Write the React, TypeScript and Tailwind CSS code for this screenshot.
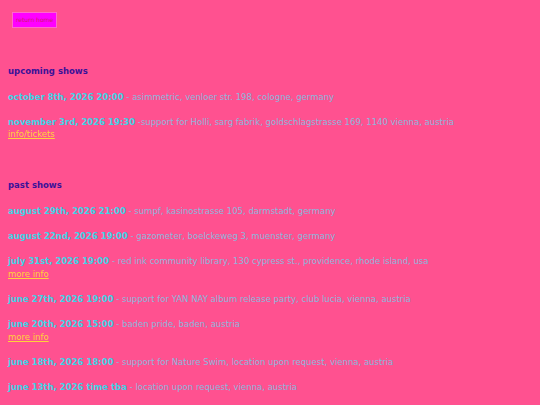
import React from "react";

type Show = { date: string; desc: string; link?: string };

const upcoming: Show[] = [
  { date: "october 8th, 2026 20:00", desc: " - asimmetric, venloer str. 198, cologne, germany" },
  {
    date: "november 3rd, 2026 19:30",
    desc: " -support for Holli, sarg fabrik, goldschlagstrasse 169, 1140 vienna, austria",
    link: "info/tickets",
  },
];

const past: Show[] = [
  { date: "august 29th, 2026 21:00", desc: " - sumpf, kasinostrasse 105, darmstadt, germany" },
  { date: "august 22nd, 2026 19:00", desc: " - gazometer, boelckeweg 3, muenster, germany" },
  {
    date: "july 31st, 2026 19:00",
    desc: " - red ink community library, 130 cypress st., providence, rhode island, usa",
    link: "more info",
  },
  { date: "june 27th, 2026 19:00", desc: " - support for YAN NAY album release party, club lucia, vienna, austria" },
  { date: "june 20th, 2026 15:00", desc: " - baden pride, baden, austria", link: "more info" },
  { date: "june 18th, 2026 18:00", desc: " - support for Nature Swim, location upon request, vienna, austria" },
  { date: "june 13th, 2026 time tba", desc: " - location upon request, vienna, austria" },
];

function Item({ s }: { s: Show }) {
  return (
    <p className="leading-[12.75px]">
      <span className="font-bold text-[#3fd3e6]">{s.date}</span>
      <span className="text-[#8db6dc]">{s.desc}</span>
      {s.link && (
        <>
          <br />
          <a href="#" className="text-[#ffd23a] underline">
            {s.link}
          </a>
        </>
      )}
    </p>
  );
}

export default function App() {
  return (
    <div
      className="min-h-[405px] w-full bg-[#ff5190] px-2 pt-3 pb-6 text-[8.5px]"
      style={{ fontFamily: '"DejaVu Sans", Verdana, sans-serif' }}
    >
      <div className="pl-1">
        <button className="flex h-4 w-[45px] items-center justify-center border border-[#ff66cc] bg-[#ff00ff] text-[6px] leading-none text-[#d01e6a]">
          return home
        </button>
      </div>
      <h2 className="mt-[37px] font-bold leading-[12.5px] text-[#3b1299]">upcoming shows</h2>
      <div className="mt-[13px] flex flex-col gap-[12.25px]">
        {upcoming.map((s) => (
          <Item key={s.date} s={s} />
        ))}
      </div>
      <h2 className="mt-[38px] font-bold leading-[12.5px] text-[#3b1299]">past shows</h2>
      <div className="mt-[13.5px] flex flex-col gap-[12.25px]">
        {past.map((s) => (
          <Item key={s.date} s={s} />
        ))}
      </div>
    </div>
  );
}
